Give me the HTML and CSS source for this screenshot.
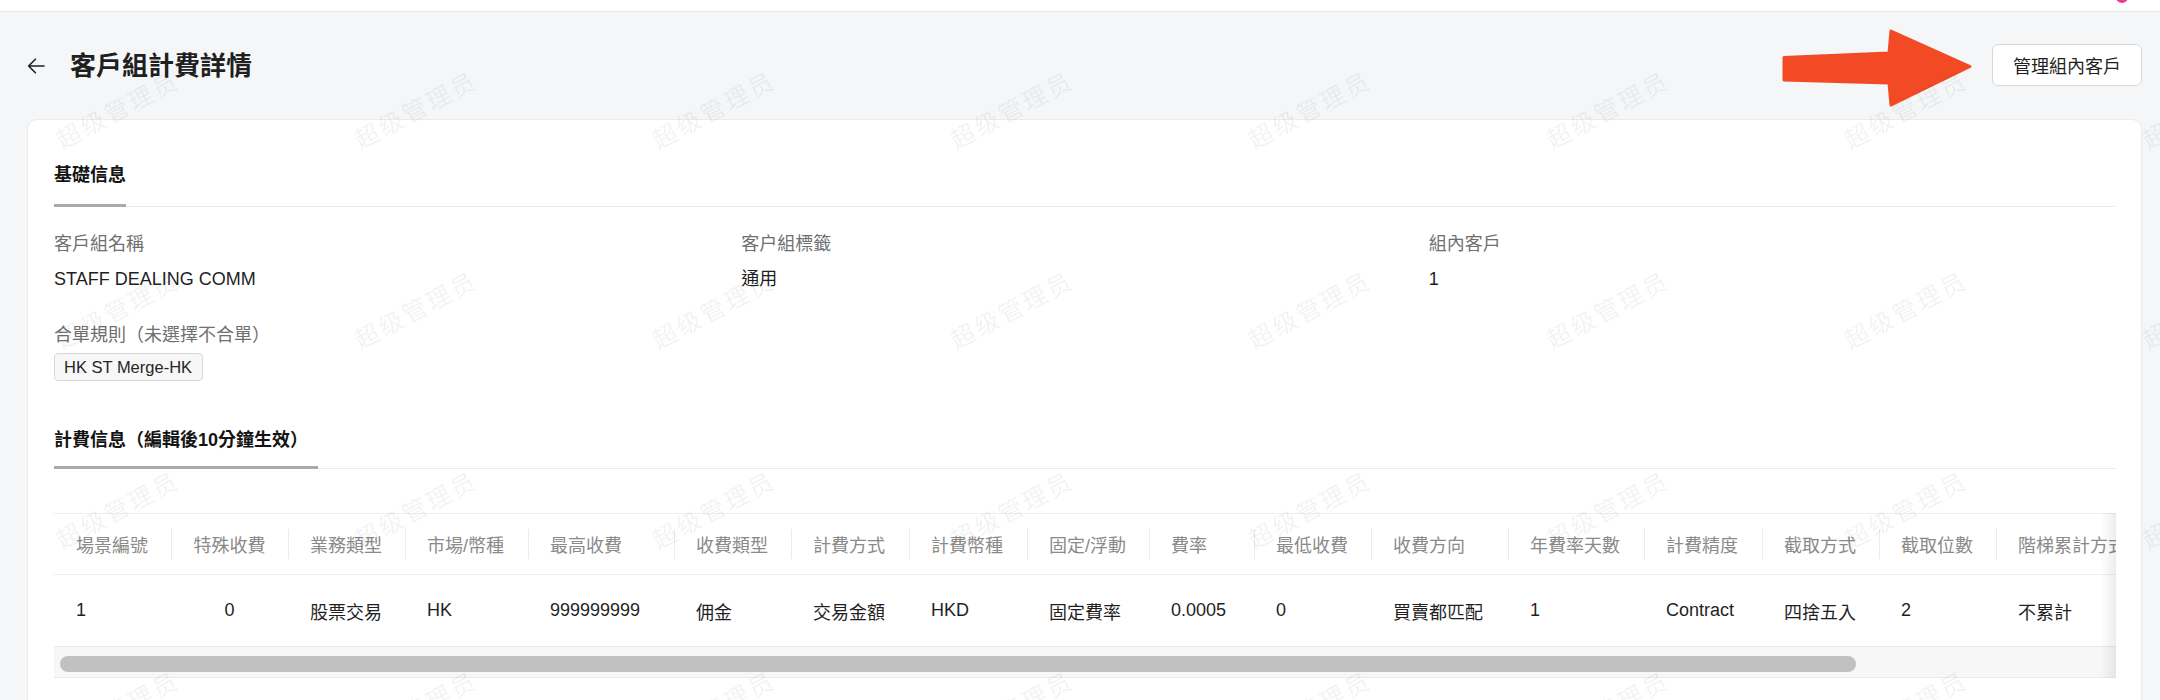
FILE: index.html
```html
<!DOCTYPE html>
<html lang="zh-Hant">
<head>
<meta charset="utf-8">
<title>客戶組計費詳情</title>
<link rel="stylesheet" href="styles.css">
</head>
<body>
<div class="topbar"><span class="avatar-dot"></span></div>
<div class="page">
  <header class="page-header">
    <div class="title-wrap">
      <svg class="back" width="18" height="18" viewBox="0 0 18 18"><path d="M17 9H1.6M8.4 2.2L1.6 9l6.8 6.8"/></svg>
      <h1 class="title">客戶組計費詳情</h1>
    </div>
    <button class="btn">管理組內客戶</button>
  </header>

  <section class="card">
    <div class="tabbar"><div class="tab">基礎信息</div></div>
    <div class="info-grid">
      <div class="field"><div class="label">客戶組名稱</div><div class="value">STAFF DEALING COMM</div></div>
      <div class="field"><div class="label">客户組標籤</div><div class="value">通用</div></div>
      <div class="field"><div class="label">組內客戶</div><div class="value">1</div></div>
      <div class="field"><div class="label">合單規則（未選擇不合單）</div><div class="tags"><span class="tag">HK ST Merge-HK</span></div></div>
    </div>

    <div class="tabbar tabbar-second"><div class="tab">計費信息（編輯後10分鐘生效）</div></div>

    <div class="table-wrap">
      <div class="table-clip">
        <table class="fee-table">
          <colgroup>
            <col><col><col><col><col><col><col><col><col><col><col><col><col><col><col><col><col>
          </colgroup>
          <thead>
            <tr>
              <th>場景編號</th><th class="center">特殊收費</th><th>業務類型</th><th>市場/幣種</th><th>最高收費</th><th>收費類型</th><th>計費方式</th><th>計費幣種</th><th>固定/浮動</th><th>費率</th><th>最低收費</th><th>收費方向</th><th>年費率天數</th><th>計費精度</th><th>截取方式</th><th>截取位數</th><th>階梯累計方式</th>
            </tr>
          </thead>
          <tbody>
            <tr>
              <td>1</td><td class="center">0</td><td>股票交易</td><td>HK</td><td>999999999</td><td>佣金</td><td>交易金額</td><td>HKD</td><td>固定費率</td><td>0.0005</td><td>0</td><td>買賣都匹配</td><td>1</td><td>Contract</td><td>四捨五入</td><td>2</td><td>不累計</td>
            </tr>
          </tbody>
        </table>
      </div>
      <div class="scrollbar"><div class="thumb"></div></div>
      <div class="edge-shadow"></div>
    </div>
  </section>
</div>

<svg class="annot-arrow" width="200" height="84" viewBox="1778 26 200 84">
  <polygon points="1784,57.5 1889,53 1891,31 1970,66.5 1891,105 1889,83 1784,80"/>
</svg>

<div class="watermark">
  <span>超级管理员</span><span>超级管理员</span><span>超级管理员</span><span>超级管理员</span><span>超级管理员</span><span>超级管理员</span><span>超级管理员</span><span>超级管理员</span>
  <span>超级管理员</span><span>超级管理员</span><span>超级管理员</span><span>超级管理员</span><span>超级管理员</span><span>超级管理员</span><span>超级管理员</span><span>超级管理员</span>
  <span>超级管理员</span><span>超级管理员</span><span>超级管理员</span><span>超级管理员</span><span>超级管理员</span><span>超级管理员</span><span>超级管理员</span><span>超级管理员</span>
  <span>超级管理员</span><span>超级管理员</span><span>超级管理员</span><span>超级管理员</span><span>超级管理员</span><span>超级管理员</span><span>超级管理员</span><span>超级管理员</span>
</div>
</body>
</html>
```

FILE: styles.css
```css
* { box-sizing: border-box; }

html, body {
  margin: 0;
  padding: 0;
}

body {
  background: #f5f6f8;
  font-family: "Liberation Sans", "Noto Sans CJK TC", "Noto Sans CJK SC", sans-serif;
  color: #1f1f1f;
  overflow: hidden;
}

.topbar {
  height: 12px;
  background: #ffffff;
  border-bottom: 1px solid #e6e7ea;
  display: flex;
  justify-content: flex-end;
  padding-right: 32px;
  overflow: hidden;
}

.avatar-dot {
  width: 12px;
  height: 12px;
  margin-top: -9px;
  border-radius: 50%;
  background: #ec3a8f;
}

.page {
  padding: 0 18px 0 27px;
}

.page-header {
  margin-top: 32px;
  height: 42px;
  display: flex;
  align-items: center;
  justify-content: space-between;
}

.title-wrap {
  display: flex;
  align-items: center;
  margin-top: 2px;
}

.back {
  fill: none;
  stroke: #1f1f1f;
  stroke-width: 1.6;
  stroke-linecap: round;
  stroke-linejoin: round;
  margin-right: 25px;
}

.title {
  margin: 0;
  font-size: 26px;
  line-height: 36px;
  font-weight: 600;
  color: #1f1f1f;
}

.btn {
  height: 42px;
  padding: 0 20px;
  background: #ffffff;
  border: 1px solid #d9d9d9;
  border-radius: 6px;
  font-family: inherit;
  font-size: 18px;
  color: #1f1f1f;
}

.card {
  margin-top: 33px;
  background: #ffffff;
  border: 1px solid #eaebed;
  border-radius: 10px;
  padding: 0 25px 60px 26px;
}

.tabbar {
  padding-top: 42px;
  border-bottom: 1px solid #ebebeb;
}

.tab {
  display: inline-block;
  font-size: 18px;
  line-height: 26px;
  font-weight: 700;
  color: #141414;
  padding-bottom: 16px;
  border-bottom: 3px solid #a8aaae;
  margin-bottom: -1px;
}

.tabbar-second {
  padding-top: 46px;
}

.tabbar-second .tab {
  padding-bottom: 13px;
  padding-right: 10px;
}

.info-grid {
  margin-top: 24px;
  display: grid;
  grid-template-columns: repeat(3, 1fr);
  row-gap: 30px;
}

.label {
  font-size: 18px;
  line-height: 26px;
  color: #707070;
}

.value {
  margin-top: 9px;
  font-size: 18px;
  line-height: 26px;
  color: #1f1f1f;
}

.tags {
  margin-top: 5px;
  display: flex;
}

.tag {
  font-size: 16.5px;
  line-height: 26px;
  padding: 0 10px 0 9px;
  background: #f7f7f7;
  border: 1px solid #d9d9d9;
  border-radius: 4px;
  color: #262626;
}

.table-wrap {
  margin-top: 44px;
  position: relative;
}

.table-clip {
  overflow: hidden;
}

.fee-table {
  border-collapse: separate;
  border-spacing: 0;
  table-layout: fixed;
  width: 2142px;
  font-size: 18px;
}

.fee-table col:nth-child(1),
.fee-table col:nth-child(2),
.fee-table col:nth-child(3),
.fee-table col:nth-child(6),
.fee-table col:nth-child(11),
.fee-table col:nth-child(15),
.fee-table col:nth-child(16) { width: 117px; }
.fee-table col:nth-child(4) { width: 123px; }
.fee-table col:nth-child(5) { width: 146px; }
.fee-table col:nth-child(7),
.fee-table col:nth-child(8),
.fee-table col:nth-child(14) { width: 118px; }
.fee-table col:nth-child(9) { width: 122px; }
.fee-table col:nth-child(10) { width: 105px; }
.fee-table col:nth-child(12) { width: 137px; }
.fee-table col:nth-child(13) { width: 136px; }
.fee-table col:nth-child(17) { width: 200px; }

.fee-table th,
.fee-table td {
  padding: 0 0 0 22px;
  text-align: left;
  white-space: nowrap;
  overflow: hidden;
}

.fee-table th {
  height: 62px;
  font-weight: 400;
  color: #8a8a8a;
  border-top: 1px solid #efefef;
  border-bottom: 1px solid #efefef;
}

.fee-table th + th {
  background: linear-gradient(#ececec, #ececec) no-repeat left center / 1px 30px;
}

.fee-table td {
  height: 72px;
  color: #1f1f1f;
  border-bottom: 1px solid #e9e9e9;
}

.fee-table .center {
  text-align: center;
  padding: 0;
}

.scrollbar {
  height: 31px;
  background: #f7f7f7;
  border-bottom: 1px solid #ebebeb;
  padding: 9px 0 0 6px;
}

.thumb {
  width: 1796px;
  height: 16px;
  border-radius: 8px;
  background: #c1c1c1;
}

.edge-shadow {
  position: absolute;
  top: 0;
  right: 0;
  bottom: 0;
  width: 16px;
  background: linear-gradient(to right, rgba(0, 0, 0, 0), rgba(0, 0, 0, 0.07));
  pointer-events: none;
}

.annot-arrow {
  position: absolute;
  left: 1778px;
  top: 26px;
}

.annot-arrow polygon {
  fill: #f34a26;
  stroke: #f34a26;
  stroke-width: 3;
  stroke-linejoin: round;
}

.watermark {
  position: fixed;
  left: -32px;
  top: 8px;
  display: grid;
  grid-template-columns: repeat(8, 298px);
  grid-auto-rows: 200px;
  pointer-events: none;
  z-index: 10;
}

.watermark span {
  display: flex;
  align-items: center;
  justify-content: center;
  font-family: "Noto Sans CJK SC", sans-serif;
  font-size: 24px;
  letter-spacing: 3px;
  color: rgba(0, 0, 0, 0.05);
  transform: rotate(-28deg);
  white-space: nowrap;
}
```
